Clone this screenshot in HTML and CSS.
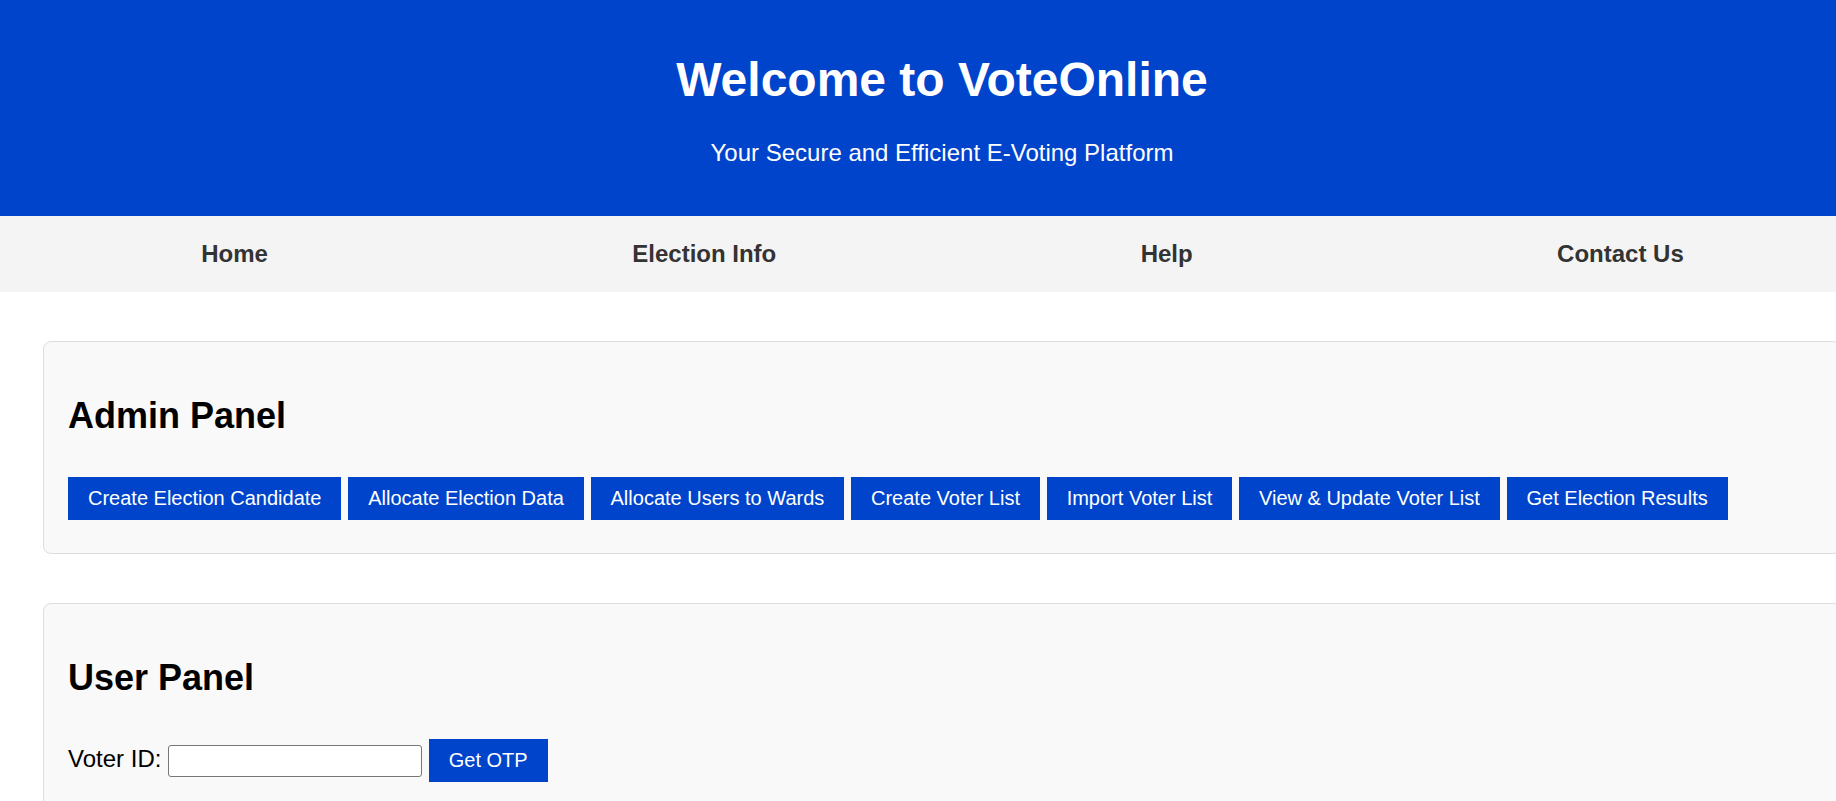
FILE: index.html
```html
<!DOCTYPE html>
<html lang="en">
<head>
<meta charset="utf-8">
<title>VoteOnline</title>
<link rel="stylesheet" href="styles.css">
</head>
<body>
<div class="page">
  <header class="site-header">
    <h1 class="site-title">Welcome to VoteOnline</h1>
    <p class="site-tagline">Your Secure and Efficient E-Voting Platform</p>
  </header>
  <nav class="site-nav">
    <ul class="nav-list">
      <li><a href="#" class="nav-link">Home</a></li>
      <li><a href="#" class="nav-link">Election Info</a></li>
      <li><a href="#" class="nav-link">Help</a></li>
      <li><a href="#" class="nav-link">Contact Us</a></li>
    </ul>
  </nav>
  <main class="content">
    <section class="panel">
      <h2 class="panel-title">Admin Panel</h2>
      <div class="actions">
        <button class="btn">Create Election Candidate</button>
        <button class="btn">Allocate Election Data</button>
        <button class="btn">Allocate Users to Wards</button>
        <button class="btn">Create Voter List</button>
        <button class="btn">Import Voter List</button>
        <button class="btn">View &amp; Update Voter List</button>
        <button class="btn">Get Election Results</button>
      </div>
    </section>
    <section class="panel">
      <h2 class="panel-title">User Panel</h2>
      <form class="actions otp-form" onsubmit="return false">
        <label class="field-label" for="voter-id">Voter ID:</label>
        <input class="text-input" id="voter-id" type="text">
        <button class="btn" type="submit">Get OTP</button>
      </form>
    </section>
  </main>
</div>
</body>
</html>
```
FILE: styles.css
```css
html, body {
  margin: 0;
  padding: 0;
  overflow: hidden;
}

body {
  font-family: "Liberation Sans", Arial, sans-serif;
  font-size: 24px;
  color: #000;
  background: #fff;
}

.page {
  width: 1884px;
}

.site-header {
  background: #0044cc;
  color: #fff;
  text-align: center;
  padding: 52px 0 0;
  height: 164px;
}

.site-title {
  margin: 0 0 32px;
  font-size: 48px;
  font-weight: bold;
}

.site-tagline {
  margin: 0;
  font-size: 24px;
}

.site-nav {
  background: #f4f4f4;
}

.nav-list {
  list-style: none;
  margin: 0;
  padding: 24px 18px 24px 19px;
  display: flex;
  justify-content: space-around;
}

.nav-link {
  color: #333;
  text-decoration: none;
  font-weight: bold;
  font-size: 24px;
}

.content {
  padding: 49px 43px 0;
}

.panel {
  background: #f9f9f9;
  border: 1px solid #ddd;
  border-radius: 8px;
  padding: 23px 24px;
  margin-bottom: 49px;
}

.panel-title {
  font-size: 36px;
  font-weight: bold;
  margin: 30px 0 40px;
}

.actions {
  margin: 0 0 10px;
  display: flex;
  align-items: baseline;
  gap: 6.7px;
}

.otp-form {
  align-items: center;
}

.btn {
  font-family: "Liberation Sans", Arial, sans-serif;
  font-size: 20px;
  line-height: 23px;
  background: #0044cc;
  color: #fff;
  border: none;
  padding: 10px 20px;
  margin: 0;
  cursor: pointer;
}

.field-label {
  font-size: 24px;
  position: relative;
  top: -2px;
}

.text-input {
  box-sizing: border-box;
  width: 254px;
  height: 32px;
  font-family: "Liberation Sans", Arial, sans-serif;
  font-size: 20px;
  border: 1px solid #767676;
  border-radius: 3px;
  padding: 3px 4px;
  background: #fff;
  margin: 0;
}
```
